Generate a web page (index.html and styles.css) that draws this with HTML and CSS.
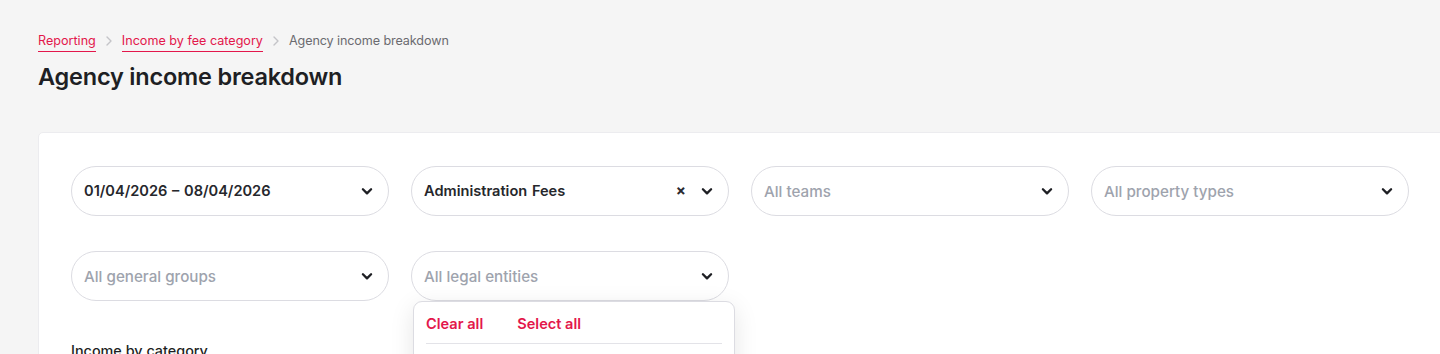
FILE: index.html
```html
<!DOCTYPE html>
<html lang="en">
<head>
<meta charset="utf-8">
<title>Agency income breakdown</title>
<link rel="stylesheet" href="styles.css">
</head>
<body>
<div class="page">
  <nav class="crumbs">
    <a class="crumb-link" href="#">Reporting</a>
    <svg class="crumb-sep" width="16" height="16" viewBox="0 0 16 16"><path d="M6 4l4 4-4 4" fill="none" stroke="#c4c4c8" stroke-width="1.4" stroke-linecap="round" stroke-linejoin="round"/></svg>
    <a class="crumb-link" href="#">Income by fee category</a>
    <svg class="crumb-sep" width="16" height="16" viewBox="0 0 16 16"><path d="M6 4l4 4-4 4" fill="none" stroke="#c4c4c8" stroke-width="1.4" stroke-linecap="round" stroke-linejoin="round"/></svg>
    <span class="crumb-current">Agency income breakdown</span>
  </nav>
  <h1 class="title">Agency income breakdown</h1>

  <section class="card">
    <div class="filters">
      <div class="pill"><span class="pill-value">01/04/2026 – 08/04/2026</span><span class="pill-icons"><svg class="chev" viewBox="0 0 12 12"><path d="M2.5 4.5L6 8l3.5-3.5" /></svg></span></div>
      <div class="pill"><span class="pill-value">Administration Fees</span><span class="pill-icons"><span class="clear">×</span><svg class="chev" viewBox="0 0 12 12"><path d="M2.5 4.5L6 8l3.5-3.5" /></svg></span></div>
      <div class="pill"><span class="pill-placeholder">All teams</span><span class="pill-icons"><svg class="chev" viewBox="0 0 12 12"><path d="M2.5 4.5L6 8l3.5-3.5" /></svg></span></div>
      <div class="pill"><span class="pill-placeholder">All property types</span><span class="pill-icons"><svg class="chev" viewBox="0 0 12 12"><path d="M2.5 4.5L6 8l3.5-3.5" /></svg></span></div>
      <div class="pill"><span class="pill-placeholder">All general groups</span><span class="pill-icons"><svg class="chev" viewBox="0 0 12 12"><path d="M2.5 4.5L6 8l3.5-3.5" /></svg></span></div>
      <div class="pill-wrap">
        <div class="pill"><span class="pill-placeholder">All legal entities</span><span class="pill-icons"><svg class="chev" viewBox="0 0 12 12"><path d="M2.5 4.5L6 8l3.5-3.5" /></svg></span></div>
        <div class="menu">
          <div class="menu-actions">
            <a class="menu-action" href="#">Clear all</a>
            <a class="menu-action" href="#">Select all</a>
          </div>
          <div class="menu-sep"></div>
        </div>
      </div>
    </div>
    <h2 class="section-title">Income by category</h2>
  </section>
</div>
</body>
</html>
```
FILE: styles.css
```css
* { box-sizing: border-box; }
html, body { margin: 0; padding: 0; }
body {
  background: #f5f5f5;
  font-family: Inter, "Noto Sans", sans-serif;
  color: #1e1f24;
  overflow: hidden;
  height: 354px;
}
.page {
  padding: 31px 0 0 38px;
}
.crumbs {
  display: flex;
  align-items: center;
  gap: 5px;
  height: 20px;
  font-size: 12.6px;
}
.crumb-link {
  color: #e3174b;
  text-decoration: none;
  border-bottom: 1px solid #e3174b;
  padding-bottom: 2px;
  line-height: 16px;
  margin-top: 3px;
}
.crumb-sep { width: 16px; height: 16px; }
.crumb-current { color: #6b6b70; line-height: 16px; letter-spacing: -0.1px; }
.title {
  margin: 12px 0 0;
  font-size: 23.5px;
  font-weight: 600;
  letter-spacing: -0.2px;
  line-height: 28px;
  color: #1e1f24;
}
.card {
  margin-top: 41px;
  width: 1430px;
  height: 260px;
  background: #fff;
  border: 1px solid #ececef;
  border-radius: 5px;
  padding: 33px 0 0 32px;
}
.filters {
  display: grid;
  grid-template-columns: repeat(4, 318px);
  column-gap: 22px;
  row-gap: 35px;
}
.pill-wrap { position: relative; }
.pill {
  height: 50px;
  border: 1px solid #dcdce2;
  border-radius: 25px;
  display: flex;
  align-items: center;
  justify-content: space-between;
  padding: 0 14px 0 12px;
  font-size: 14.6px;
  font-weight: 600;
  background: #fff;
}
.pill-value { color: #26272c; word-spacing: 1px; }
.pill-placeholder { color: #9ea3ad; font-weight: 500; font-size: 15.2px; }
.pill-icons { display: flex; align-items: center; gap: 14px; }
.chev {
  width: 14px;
  height: 14px;
  fill: none;
  stroke: #1e1f24;
  stroke-width: 2;
  stroke-linecap: round;
  stroke-linejoin: round;
}
.clear {
  font-size: 15px;
  font-weight: 700;
  color: #2a2a30;
  line-height: 14px;
}
.menu {
  position: absolute;
  left: 2px;
  top: 50px;
  width: 322px;
  height: 120px;
  background: #fff;
  border: 1px solid #dcdce2;
  border-radius: 9px;
  box-shadow: 0 6px 24px rgba(0, 0, 0, 0.10);
  padding: 0 12px;
  z-index: 2;
}
.menu-actions {
  display: flex;
  gap: 34px;
  padding: 13px 0 0 0;
  height: 41px;
}
.menu-action {
  color: #e3174b;
  text-decoration: none;
  font-size: 14.6px;
  font-weight: 600;
  line-height: 18px;
}
.menu-sep {
  height: 1px;
  background: #e3e3e8;
}
.section-title {
  margin: 41px 0 0;
  font-size: 14.4px;
  font-weight: 500;
  line-height: 18px;
  color: #1e1f24;
}
```
